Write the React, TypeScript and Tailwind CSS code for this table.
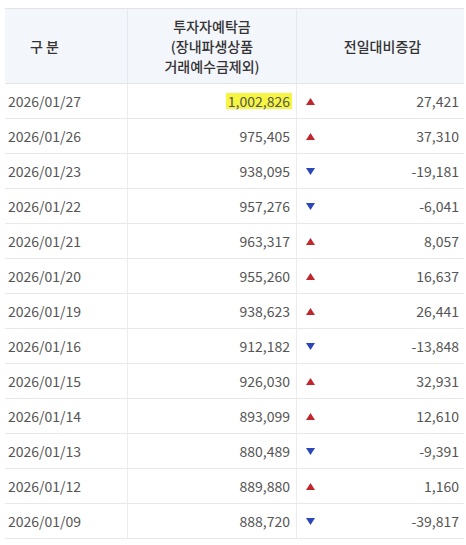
import React from "react";

type Row = { date: string; amount: string; diff: string; up: boolean; hl?: boolean };

const rows: Row[] = [
  { date: "2026/01/27", amount: "1,002,826", diff: "27,421", up: true, hl: true },
  { date: "2026/01/26", amount: "975,405", diff: "37,310", up: true },
  { date: "2026/01/23", amount: "938,095", diff: "-19,181", up: false },
  { date: "2026/01/22", amount: "957,276", diff: "-6,041", up: false },
  { date: "2026/01/21", amount: "963,317", diff: "8,057", up: true },
  { date: "2026/01/20", amount: "955,260", diff: "16,637", up: true },
  { date: "2026/01/19", amount: "938,623", diff: "26,441", up: true },
  { date: "2026/01/16", amount: "912,182", diff: "-13,848", up: false },
  { date: "2026/01/15", amount: "926,030", diff: "32,931", up: true },
  { date: "2026/01/14", amount: "893,099", diff: "12,610", up: true },
  { date: "2026/01/13", amount: "880,489", diff: "-9,391", up: false },
  { date: "2026/01/12", amount: "889,880", diff: "1,160", up: true },
  { date: "2026/01/09", amount: "888,720", diff: "-39,817", up: false },
];

function Tri({ up }: { up: boolean }) {
  return up ? (
    <svg width="9" height="7" viewBox="0 0 9 7">
      <polygon points="4.5,0 9,7 0,7" fill="#c0262c" />
    </svg>
  ) : (
    <svg width="9" height="7" viewBox="0 0 9 7">
      <polygon points="0,0 9,0 4.5,7" fill="#2a46b8" />
    </svg>
  );
}

export default function App() {
  return (
    <div
      className="w-[466px] h-[545px] bg-white pt-[8px] pl-[5px]"
      style={{ fontFamily: '"Noto Sans CJK KR", "Noto Sans", sans-serif' }}
    >
      <div className="w-[459px] border-t border-[#e3e3e3]">
        <div className="grid grid-cols-[123px_169px_167px] h-[75px] bg-[#f3f6fb] border-b border-[#e3e3e3] text-[14px] font-medium text-[#333] leading-[20px]">
          <div className="flex items-center pl-[25px] border-r border-[#e6e9ef]">구 분</div>
          <div className="flex flex-col items-center justify-center border-r border-[#e6e9ef]">
            <span>투자자예탁금</span>
            <span>(장내파생상품</span>
            <span>거래예수금제외)</span>
          </div>
          <div className="flex items-center justify-center pl-[4px]">전일대비증감</div>
        </div>
        {rows.map((r) => (
          <div
            key={r.date}
            className="grid grid-cols-[123px_169px_167px] h-[35px] border-b border-[#e8e8e8] text-[14px] text-[#555]"
          >
            <div className="flex items-center pl-[3px] border-r border-[#ececec]">{r.date}</div>
            <div className="flex items-center justify-end pr-[6px] border-r border-[#ececec]">
              <span className={r.hl ? "bg-[#f5f542] px-[2px] -mr-[2px] leading-[16px]" : ""}>{r.amount}</span>
            </div>
            <div className="flex items-center justify-between pl-[9px] pr-[5px]">
              <Tri up={r.up} />
              <span>{r.diff}</span>
            </div>
          </div>
        ))}
      </div>
    </div>
  );
}
